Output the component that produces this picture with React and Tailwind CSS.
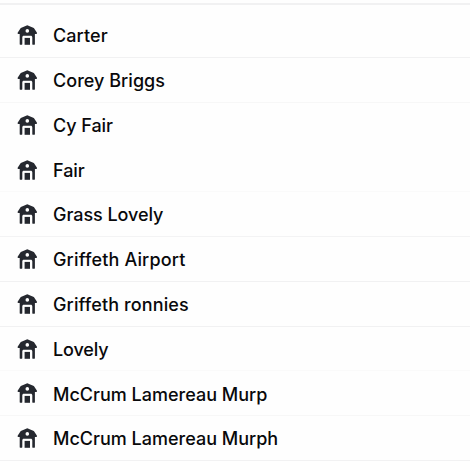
const farms = [
  { name: 'Carter', divider: 'bg-[#f1f1f2]', tracking: 'tracking-[0.1px]' },
  { name: 'Corey Briggs', divider: 'bg-[#f7f7f7]', tracking: 'tracking-[0.03px]' },
  { name: 'Cy Fair', divider: 'bg-[#fefefe]', tracking: 'tracking-[-0.05px]' },
  { name: 'Fair', divider: 'bg-[#fafafa]', tracking: 'tracking-[-0.05px]' },
  { name: 'Grass Lovely', divider: 'bg-[#f3f3f4]', tracking: 'tracking-[-0.06px]' },
  { name: 'Griffeth Airport', divider: 'bg-[#f1f1f2]', tracking: 'tracking-[0.16px]' },
  { name: 'Griffeth ronnies', divider: 'bg-[#f1f1f2]', tracking: 'tracking-[0.12px]' },
  { name: 'Lovely', divider: 'bg-[#fafafa]', tracking: 'tracking-[-0.15px]' },
  { name: 'McCrum Lamereau Murp', divider: 'bg-[#f7f7f7]', tracking: 'tracking-normal' },
  { name: 'McCrum Lamereau Murph', divider: 'bg-[#f1f1f2]', tracking: 'tracking-normal' },
];

function BarnIcon({ className }) {
  return (
    <svg viewBox="-0.3 0 20 20" className={className} aria-hidden="true">
      <path
        fill="currentColor"
        fillRule="evenodd"
        d="M10 .2 4.1 2.7a2 2 0 0 0-1 .9L.5 7.4c-.5.8-.2 1.5.6 1.5h1.3v10c0 .6.3.9.8.9h1c.5 0 .8-.3.8-.9v-6.5c0-1 .6-1.6 1.6-1.6h6.8c1 0 1.6.6 1.6 1.6v6.5c0 .6.3.9.8.9h1c.5 0 .8-.3.8-.9v-10h1.3c.8 0 1.1-.7.6-1.5l-2.6-3.8a2 2 0 0 0-1-.9L10 .2ZM10 4.1a1.8 1.8 0 1 0 0 3.6 1.8 1.8 0 0 0 0-3.6Z"
      />
      <path fill="currentColor" d="M7.3 12.9h5.4v6.9H7.3z" />
    </svg>
  );
}

export default function App() {
  return (
    <div className="h-[470px] w-full overflow-hidden bg-[#fefefe] pt-[3px] font-['Inter',sans-serif]">
      <div className="h-0.5 bg-[#f1f1f2]" />
      <ul className="pt-[8.2px]">
        {farms.map((farm) => (
          <li key={farm.name} className="flex h-[44.78px] flex-col">
            <div className="flex flex-1 items-center gap-4 pt-[0.4px] pl-[17px]">
              <BarnIcon className="size-5 shrink-0 text-[#25282f]" />
              <span className={`pt-[2.3px] text-lg font-medium whitespace-nowrap text-[#09090b] ${farm.tracking}`}>
                {farm.name}
              </span>
            </div>
            <div className={`h-px ${farm.divider}`} />
          </li>
        ))}
      </ul>
    </div>
  );
}
